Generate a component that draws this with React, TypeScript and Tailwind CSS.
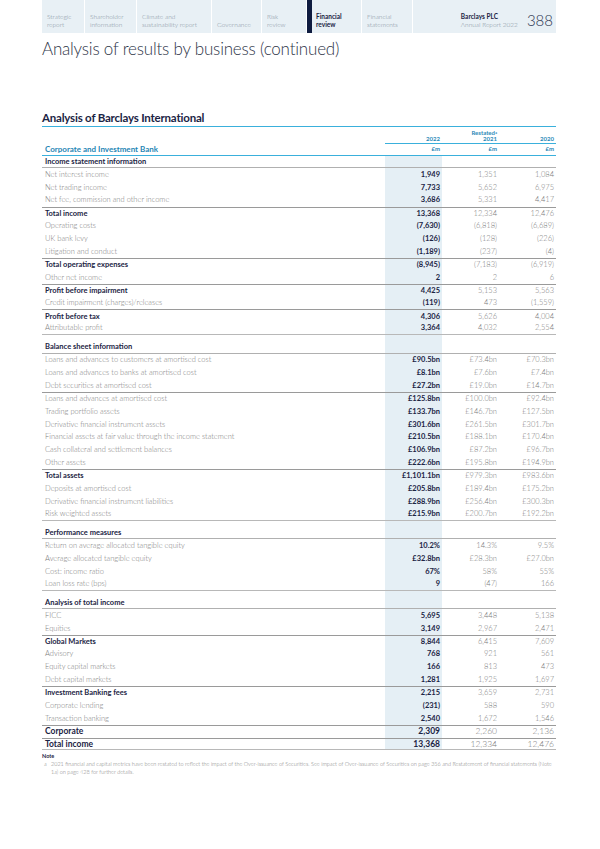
type Row = { label: string; v: string[]; bold?: boolean; top?: boolean; big?: boolean };
type Section = { title: string; rows: Row[] };

const nav = [
  { a: "Strategic", b: "report", w: "w-[43px]" },
  { a: "Shareholder", b: "information", w: "w-[52px]" },
  { a: "Climate and", b: "sustainability report", w: "w-[75px]" },
  { a: "", b: "Governance", w: "w-[50px]" },
  { a: "Risk", b: "review", w: "w-[45px]" },
];

const sections: Section[] = [
  {
    title: "Income statement information",
    rows: [
      { label: "Net interest income", v: ["1,949", "1,351", "1,084"] },
      { label: "Net trading income", v: ["7,733", "5,652", "6,975"] },
      { label: "Net fee, commission and other income", v: ["3,686", "5,331", "4,417"] },
      { label: "Total income", v: ["13,368", "12,334", "12,476"], bold: true, top: true },
      { label: "Operating costs", v: ["(7,630)", "(6,818)", "(6,689)"] },
      { label: "UK bank levy", v: ["(126)", "(128)", "(226)"] },
      { label: "Litigation and conduct", v: ["(1,189)", "(237)", "(4)"] },
      { label: "Total operating expenses", v: ["(8,945)", "(7,183)", "(6,919)"], bold: true, top: true },
      { label: "Other net income", v: ["2", "2", "6"] },
      { label: "Profit before impairment", v: ["4,425", "5,153", "5,563"], bold: true, top: true },
      { label: "Credit impairment (charges)/releases", v: ["(119)", "473", "(1,559)"] },
      { label: "Profit before tax", v: ["4,306", "5,626", "4,004"], bold: true, top: true },
      { label: "Attributable profit", v: ["3,364", "4,032", "2,554"] },
    ],
  },
  {
    title: "Balance sheet information",
    rows: [
      { label: "Loans and advances to customers at amortised cost", v: ["£90.5bn", "£73.4bn", "£70.3bn"] },
      { label: "Loans and advances to banks at amortised cost", v: ["£8.1bn", "£7.6bn", "£7.4bn"] },
      { label: "Debt securities at amortised cost", v: ["£27.2bn", "£19.0bn", "£14.7bn"] },
      { label: "Loans and advances at amortised cost", v: ["£125.8bn", "£100.0bn", "£92.4bn"], top: true },
      { label: "Trading portfolio assets", v: ["£133.7bn", "£146.7bn", "£127.5bn"] },
      { label: "Derivative financial instrument assets", v: ["£301.6bn", "£261.5bn", "£301.7bn"] },
      { label: "Financial assets at fair value through the income statement", v: ["£210.5bn", "£188.1bn", "£170.4bn"] },
      { label: "Cash collateral and settlement balances", v: ["£106.9bn", "£87.2bn", "£96.7bn"] },
      { label: "Other assets", v: ["£222.6bn", "£195.8bn", "£194.9bn"] },
      { label: "Total assets", v: ["£1,101.1bn", "£979.3bn", "£983.6bn"], bold: true, top: true },
      { label: "Deposits at amortised cost", v: ["£205.8bn", "£189.4bn", "£175.2bn"] },
      { label: "Derivative financial instrument liabilities", v: ["£288.9bn", "£256.4bn", "£300.3bn"] },
      { label: "Risk weighted assets", v: ["£215.9bn", "£200.7bn", "£192.2bn"] },
    ],
  },
  {
    title: "Performance measures",
    rows: [
      { label: "Return on average allocated tangible equity", v: ["10.2%", "14.3%", "9.5%"] },
      { label: "Average allocated tangible equity", v: ["£32.8bn", "£28.3bn", "£27.0bn"] },
      { label: "Cost: income ratio", v: ["67%", "58%", "55%"] },
      { label: "Loan loss rate (bps)", v: ["9", "(47)", "166"] },
    ],
  },
  {
    title: "Analysis of total income",
    rows: [
      { label: "FICC", v: ["5,695", "3,448", "5,138"] },
      { label: "Equities", v: ["3,149", "2,967", "2,471"] },
      { label: "Global Markets", v: ["8,844", "6,415", "7,609"], bold: true, top: true },
      { label: "Advisory", v: ["768", "921", "561"] },
      { label: "Equity capital markets", v: ["166", "813", "473"] },
      { label: "Debt capital markets", v: ["1,281", "1,925", "1,697"] },
      { label: "Investment Banking fees", v: ["2,215", "3,659", "2,731"], bold: true, top: true },
      { label: "Corporate lending", v: ["(231)", "588", "590"] },
      { label: "Transaction banking", v: ["2,540", "1,672", "1,546"] },
      { label: "Corporate", v: ["2,309", "2,260", "2,136"], bold: true, top: true, big: true },
      { label: "Total income", v: ["13,368", "12,334", "12,476"], bold: true, top: true, big: true },
    ],
  },
];

const grid = "grid grid-cols-[1fr_57px_57px_57px]";

function DataRow({ row, last }: { row: Row; last: boolean }) {
  return (
    <div
      className={`${grid} h-[12.85px] ${row.top ? "border-t border-[#9a9a9a]" : ""} ${
        last ? "border-b-[1.5px] border-b-[#b8b8b8]" : ""
      } ${row.big ? "text-[8.5px]" : "text-[7.5px]"}`}
    >
      <div
        className={`flex items-center pl-[3px] ${
          row.bold ? "font-bold text-[#1b2444]" : "font-light text-[#7a7a7a]"
        }`}
      >
        {row.label}
      </div>
      <div className="flex items-center justify-end bg-[#e5eff5] pr-[2px] font-bold text-[#1b2444]">{row.v[0]}</div>
      <div className="flex items-center justify-end pr-[2px] font-light text-[#7a7a7a]">{row.v[1]}</div>
      <div className="flex items-center justify-end pr-[2px] font-light text-[#7a7a7a]">{row.v[2]}</div>
    </div>
  );
}

function Gap() {
  return (
    <div className={`${grid} h-[6px]`}>
      <div />
      <div className="bg-[#e5eff5]" />
      <div />
      <div />
    </div>
  );
}

export default function App() {
  return (
    <div className="w-[600px] h-[849px] bg-white pl-[42px] pr-[44px] font-['Lato',sans-serif] leading-none">
      {/* Top navigation */}
      <div className="flex h-[33px] bg-[#e8f0f5] text-[6.5px] leading-[7.5px]">
        {nav.map((n) => (
          <div
            key={n.b}
            className={`${n.w} flex flex-col justify-end border-r border-white pb-[5px] pl-[5px] font-light text-[#85909e]`}
          >
            {n.a && <span>{n.a}</span>}
            <span>{n.b}</span>
          </div>
        ))}
        <div className="w-[5px] bg-[#0f1c40]" />
        <div className="flex w-[50px] flex-col justify-end border-r border-white pb-[5px] pl-[4px] font-bold text-[#1b2444]">
          <span>Financial</span>
          <span>review</span>
        </div>
        <div className="flex w-[51px] flex-col justify-end border-r border-white pb-[5px] pl-[5px] font-light text-[#85909e]">
          <span>Financial</span>
          <span>statements</span>
        </div>
        <div className="flex flex-1 items-end justify-end gap-[9px] pb-[5px] pr-[3px]">
          <div className="flex flex-col">
            <span className="font-bold text-[#1b2444]">Barclays PLC</span>
            <span className="font-light text-[#85909e]">Annual Report 2022</span>
          </div>
          <span className="text-[15px] leading-[15px] font-light text-[#2b3550]">388</span>
        </div>
      </div>

      <h1 className="mt-[6px] h-[20px] text-[17px] leading-[20px] font-light tracking-[-0.2px] text-[#2e3548]">
        Analysis of results by business (continued)
      </h1>

      <h2 className="mt-[53px] flex h-[14.5px] items-end border-b-[1.5px] border-[#3ab0dc] pb-[2px] text-[11.5px] font-bold tracking-[-0.2px] text-[#1b2444]">
        Analysis of Barclays International
      </h2>

      {/* Column headers */}
      <div className={`${grid} h-[9px] text-[6px] font-bold text-[#2b8ab8]`}>
        <div />
        <div />
        <div className="flex items-end justify-end pr-[2px]">
          Restated<sup className="text-[4px] -top-[3px]">a</sup>
        </div>
        <div />
      </div>
      <div className={`${grid} h-[8px] text-[6px] font-bold text-[#2b8ab8]`}>
        <div />
        <div className="flex items-center justify-end border-b border-[#3ab0dc] pr-[2px]">2022</div>
        <div className="flex items-center justify-end border-b border-[#3ab0dc] pr-[2px]">2021</div>
        <div className="flex items-center justify-end border-b border-[#3ab0dc] pr-[2px]">2020</div>
      </div>
      <div className={`${grid} h-[12px] border-b-[1.5px] border-[#3ab0dc] font-bold text-[#1f86b5]`}>
        <div className="flex items-center pl-[3px] text-[8px]">Corporate and Investment Bank</div>
        <div className="flex items-center justify-end pr-[2px] text-[6px]">£m</div>
        <div className="flex items-center justify-end pr-[2px] text-[6px]">£m</div>
        <div className="flex items-center justify-end pr-[2px] text-[6px]">£m</div>
      </div>

      {sections.map((s, si) => (
        <div key={s.title}>
          {si > 0 && <Gap />}
          <div className={`${grid} h-[12.6px] border-b-[1.5px] border-[#b0b0b0] text-[7.5px] font-bold text-[#1b2444]`}>
            <div className="flex items-center pl-[3px]">{s.title}</div>
            <div className="bg-[#e5eff5]" />
            <div />
            <div />
          </div>
          {s.rows.map((r, i) => (
            <DataRow key={r.label + i} row={r} last={i === s.rows.length - 1} />
          ))}
        </div>
      ))}

      {/* Note */}
      <div className="mt-[2px] text-[5.5px] leading-[8px]">
        <div className="font-bold text-[#1b2444]">Note</div>
        <div className="flex font-light text-[#7a7a7a]">
          <span className="w-[9px] shrink-0 pl-[2px]">a</span>
          <span>
            2021 financial and capital metrics have been restated to reflect the impact of the Over-issuance of
            Securities. See impact of Over-issuance of Securities on page 356 and Restatement of financial statements
            (Note 1a) on page 428 for further details.
          </span>
        </div>
      </div>
    </div>
  );
}
